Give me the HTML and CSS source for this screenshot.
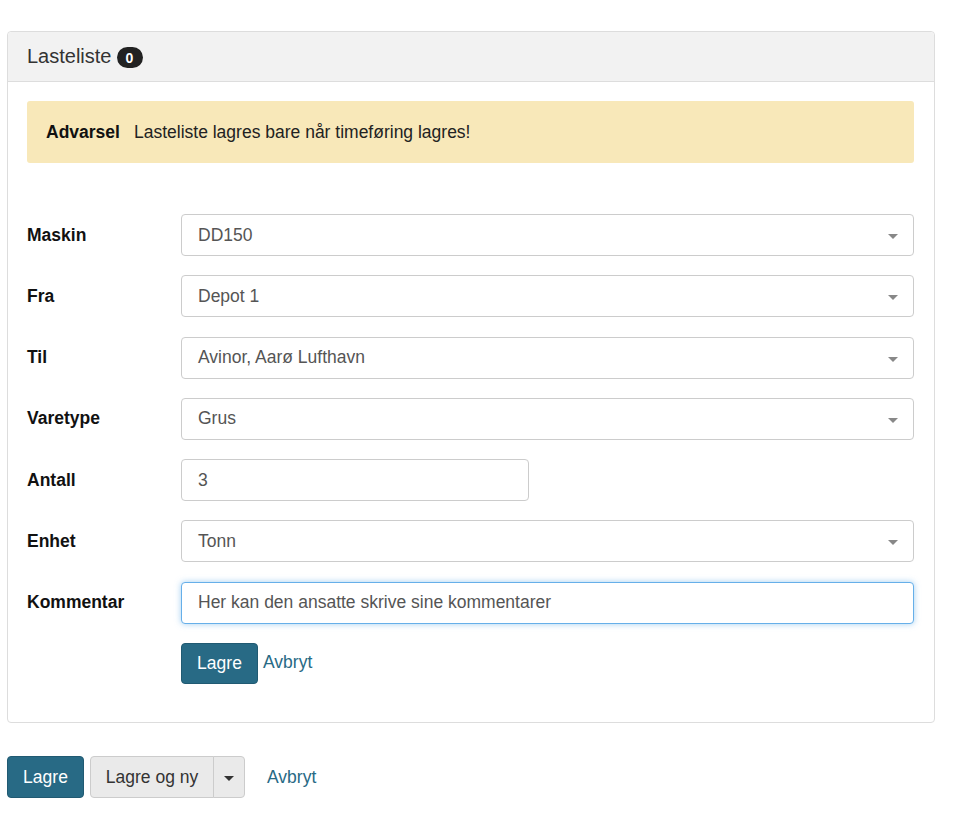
FILE: index.html
```html
<!DOCTYPE html>
<html lang="no">
<head>
<meta charset="utf-8">
<title>Lasteliste</title>
<link rel="stylesheet" href="styles.css">
</head>
<body>
<div class="page">
  <section class="panel">
    <header class="panel-heading">Lasteliste <span class="badge">0</span></header>
    <div class="panel-body">
      <div class="alert"><strong>Advarsel</strong> Lasteliste lagres bare når timeføring lagres!</div>
      <form class="form">
        <div class="row"><label>Maskin</label><div class="control select">DD150<span class="caret"></span></div></div>
        <div class="row"><label>Fra</label><div class="control select">Depot 1<span class="caret"></span></div></div>
        <div class="row"><label>Til</label><div class="control select">Avinor, Aarø Lufthavn<span class="caret"></span></div></div>
        <div class="row"><label>Varetype</label><div class="control select">Grus<span class="caret"></span></div></div>
        <div class="row"><label>Antall</label><div class="control short">3</div></div>
        <div class="row"><label>Enhet</label><div class="control select">Tonn<span class="caret"></span></div></div>
        <div class="row"><label>Kommentar</label><div class="control focus">Her kan den ansatte skrive sine kommentarer</div></div>
        <div class="row actions"><button type="button" class="btn btn-primary">Lagre</button><a class="link" href="#">Avbryt</a></div>
      </form>
    </div>
  </section>
  <div class="footer-actions">
    <button type="button" class="btn btn-primary">Lagre</button>
    <div class="btn-group">
      <button type="button" class="btn btn-default">Lagre og ny</button>
      <button type="button" class="btn btn-default btn-caret"><span class="caret dark"></span></button>
    </div>
    <a class="link footer-link" href="#">Avbryt</a>
  </div>
</div>
</body>
</html>
```
FILE: styles.css
```css
html, body {
  margin: 0;
  background: #fff;
}
body {
  font-family: "Liberation Sans", Arial, sans-serif;
  font-size: 17.5px;
  color: #333;
}
.page {
  padding: 31px 30px 0 7px;
}
.panel {
  border: 1px solid #ddd;
  border-radius: 4px;
  box-sizing: border-box;
  height: 692px;
}
.panel-heading {
  background: #f2f2f2;
  border-bottom: 1px solid #ddd;
  border-radius: 4px 4px 0 0;
  height: 50px;
  box-sizing: border-box;
  padding: 0 19px;
  display: flex;
  align-items: center;
  gap: 5px;
  font-size: 20px;
  color: #333;
}
.badge {
  display: inline-flex;
  align-items: center;
  justify-content: center;
  background: #222;
  color: #fff;
  font-size: 14px;
  font-weight: bold;
  width: 26px;
  height: 21px;
  border-radius: 11px;
  margin-top: 2px;
}
.panel-body {
  padding: 19px 20px 0 19px;
}
.alert {
  background: #f8e8b9;
  border-radius: 3px;
  height: 62px;
  box-sizing: border-box;
  padding: 0 19px;
  display: flex;
  align-items: center;
  gap: 14px;
  color: #222;
}
.alert strong {
  color: #111;
}
.form {
  margin-top: 51px;
  display: flex;
  flex-direction: column;
  gap: 19.3px;
}
.row {
  display: flex;
  align-items: center;
}
.row label {
  width: 154px;
  flex: none;
  font-weight: bold;
  color: #111;
}
.control {
  flex: 1;
  height: 42px;
  box-sizing: border-box;
  border: 1px solid #ccc;
  border-radius: 4px;
  padding: 0 16px;
  display: flex;
  align-items: center;
  color: #555;
  background: #fff;
  position: relative;
}
.control.short {
  flex: none;
  width: 348px;
}
.control.focus {
  border-color: #66afe9;
  box-shadow: 0 0 6px rgba(102, 175, 233, 0.6);
}
.caret {
  position: absolute;
  right: 15px;
  top: 19px;
  width: 0;
  height: 0;
  border-left: 5px solid transparent;
  border-right: 5px solid transparent;
  border-top: 5px solid #888;
}
.caret.dark {
  position: static;
  display: inline-block;
  border-top-color: #333;
  margin-top: 2px;
}
.actions {
  padding-left: 154px;
  gap: 5px;
}
.btn {
  font-family: inherit;
  font-size: 17.5px;
  height: 42px;
  box-sizing: border-box;
  border-radius: 4px;
  padding: 0 16px;
  cursor: pointer;
}
.btn-primary {
  background: #286a85;
  color: #fff;
  border: 1px solid #215a72;
  width: 77px;
  padding: 0;
}
.actions .btn-primary {
  height: 41px;
}
.btn-default {
  background: #eaeaea;
  color: #333;
  border: 1px solid #ccc;
}
.link {
  color: #286a85;
  text-decoration: none;
}
.actions .link {
  margin-top: -2px;
}
.footer-actions {
  margin-top: 33px;
  display: flex;
  align-items: center;
}
.btn-group {
  display: flex;
  margin-left: 6px;
}
.btn-group .btn-default:first-child {
  border-radius: 4px 0 0 4px;
  width: 124px;
  padding: 0;
}
.btn-group .btn-caret {
  border-radius: 0 4px 4px 0;
  border-left: 1px solid #ccc;
  margin-left: -1px;
  width: 32px;
  padding: 0;
  display: flex;
  align-items: center;
  justify-content: center;
}
.footer-link {
  margin-left: 22px;
}
```
